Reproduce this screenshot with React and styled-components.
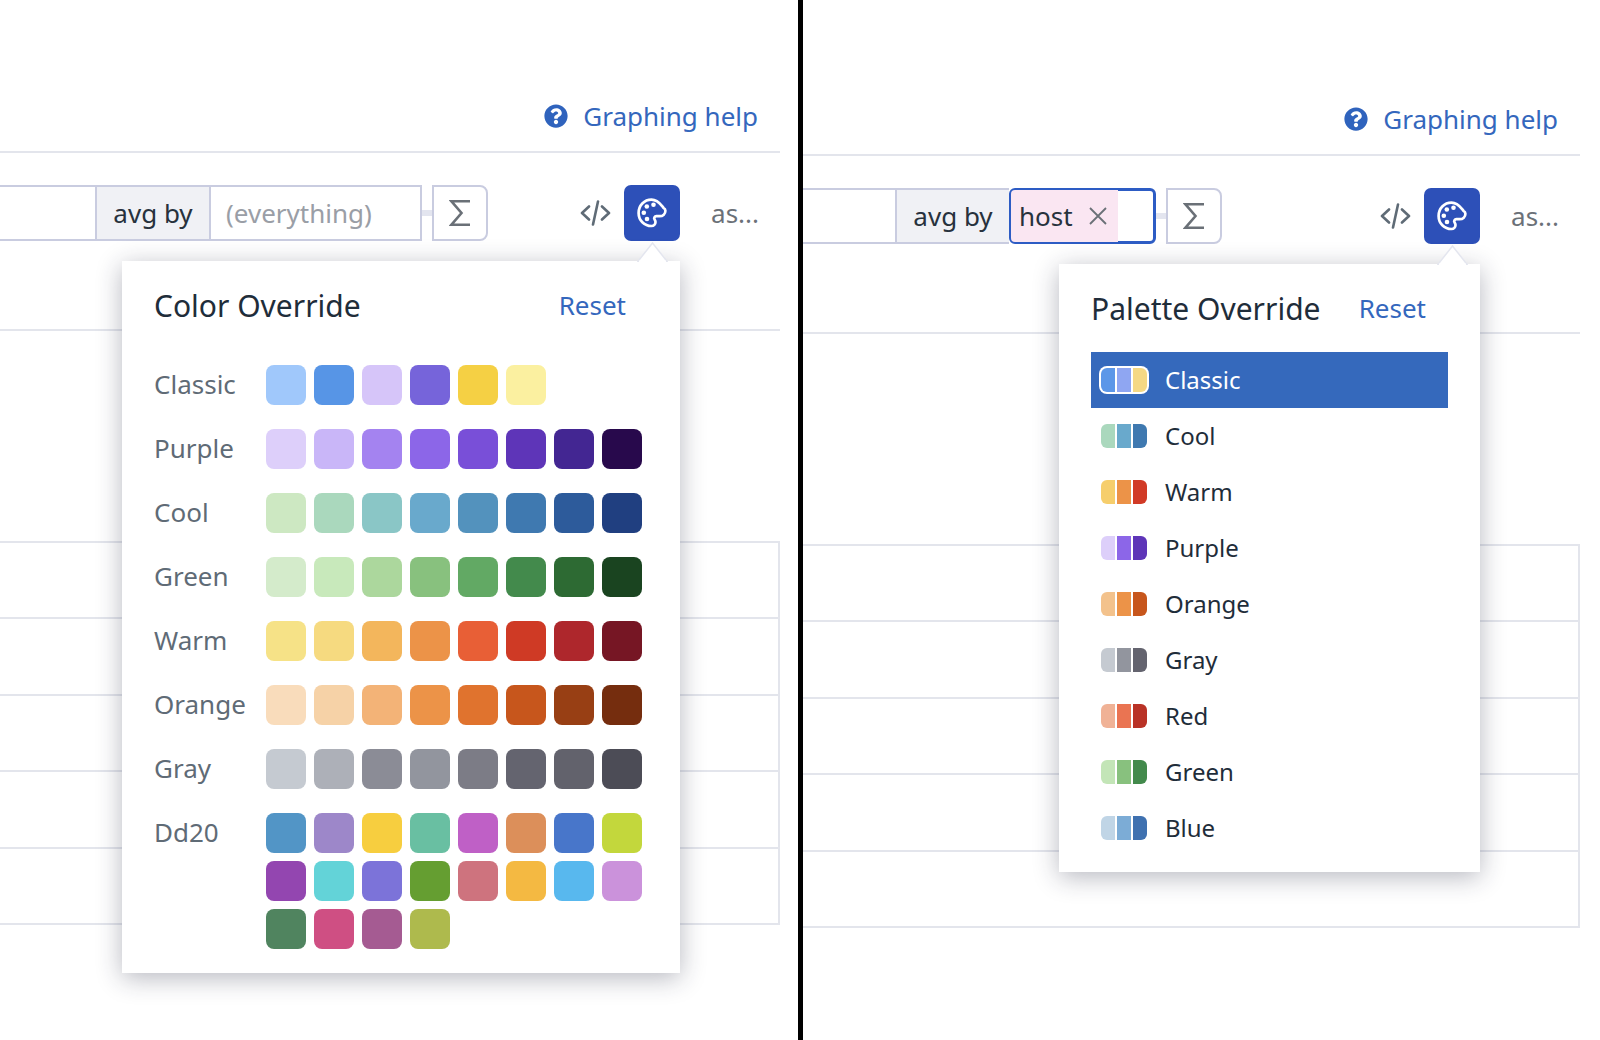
import React from "react";
import styled, { createGlobalStyle } from "styled-components";
import { FaQuestionCircle } from "react-icons/fa";

const Global = createGlobalStyle`
  html, body { margin: 0; padding: 0; background: #fff; }
  body { font-family: "Noto Sans", "Open Sans", sans-serif; color: #1f2d3a; }
  * { box-sizing: border-box; }
`;

const Page = styled.div`
  display: flex;
  width: 1600px;
  height: 1040px;
  overflow: hidden;
  background: #fff;
`;
const Divider = styled.div`
  width: 5px;
  flex: none;
  background: #000;
`;
const Panel = styled.section`
  position: relative;
  flex: none;
  width: ${p => p.$width}px;
  padding-top: ${p => p.$top}px;
  padding-right: ${p => p.$gutter}px;
`;
const HelpRow = styled.div`
  height: 153px;
  padding: 99px 22px 0 0;
  display: flex;
  justify-content: flex-end;
  align-items: flex-start;
  border-bottom: 2px solid #e3e5ec;
`;
const HelpLink = styled.a`
  display: flex;
  align-items: center;
  gap: 15px;
  height: 34px;
  font-size: 26px;
  color: #3467bd;
  & svg { width: 24px; height: 24px; color: #2f63bd; }
`;
const Toolbar = styled.div`
  display: flex;
  align-items: stretch;
  height: 178px;
  padding: 32px 21px 88px 0;
  border-bottom: 2px solid #e3e5ec;
`;
const MetricField = styled.div`
  width: ${p => p.$width}px;
  flex: none;
  border: 2px solid #c9cce0;
  border-left: 0;
  border-right: 0;
`;
const AvgBy = styled.div`
  width: 114px;
  flex: none;
  background: #f0f1f5;
  border: 2px solid #c9cce0;
  border-right: 0;
  display: flex;
  align-items: center;
  justify-content: center;
  font-size: 26px;
  color: #27323d;
  white-space: nowrap;
`;
const GroupField = styled.div`
  width: 213px;
  flex: none;
  border: 2px solid #c9cce0;
  padding-left: 15px;
  display: flex;
  align-items: center;
  font-size: 26px;
  color: #9a9ea6;
  white-space: nowrap;
`;
const FocusField = styled.div`
  width: 147px;
  flex: none;
  border: 3px solid #2d5cc4;
  border-radius: 6px;
  display: flex;
  align-items: stretch;
`;
const Tag = styled.div`
  position: relative;
  margin: -1px 0 -1px -1px;
  width: 107px;
  padding-left: 8px;
  background: #fae6f2;
  display: flex;
  align-items: center;
  gap: 16px;
  font-size: 26px;
  color: #27323d;
  border-radius: 4px 0 0 4px;
`;
const Connector = styled.div`
  width: 10px;
  height: 6px;
  flex: none;
  align-self: center;
  background: #e3e5ef;
`;
const SigmaBox = styled.div`
  width: 56px;
  flex: none;
  border: 2px solid #c9cce0;
  border-radius: 0 8px 8px 0;
  display: flex;
  align-items: center;
  justify-content: center;
  color: #6a7077;
`;
const Spacer = styled.div` flex: 1; `;
const CodeIconWrap = styled.div`
  align-self: center;
  display: flex;
  margin-right: 12px;
  color: #5f6b76;
`;
const PaletteButton = styled.button`
  width: 56px;
  flex: none;
  border: 0;
  padding: 0;
  border-radius: 7px;
  background: #2d50b8;
  color: #fff;
  display: flex;
  align-items: center;
  justify-content: center;
`;
const AsLabel = styled.div`
  margin-left: 31px;
  align-self: center;
  font-size: 26px;
  color: #6b7178;
`;
const Table = styled.div`
  margin-top: 210px;
  border-top: 2px solid #e3e5ec;
  border-right: 2px solid #e3e5ec;
`;
const TableRow = styled.div`
  height: 76.4px;
  border-bottom: 2px solid #e3e5ec;
`;
const Popover = styled.div`
  position: absolute;
  z-index: 3;
  left: ${p => p.$left}px;
  top: ${p => p.$y}px;
  width: ${p => p.$width}px;
  padding: 22px 32px ${p => p.$bottom}px 32px;
  background: #fff;
  box-shadow: 0 5px 24px rgba(30, 35, 60, 0.32);
`;
const Arrow = styled.svg`
  position: absolute;
  right: 12px;
  top: -19px;
  width: 31px;
  height: 20px;
  display: block;
`;
const PopHeader = styled.header`
  height: 44px;
  margin-bottom: ${p => p.$space}px;
  padding-right: 22px;
  display: flex;
  align-items: center;
  justify-content: space-between;
`;
const PopTitle = styled.h3`
  margin: 0;
  font-size: 30px;
  font-weight: 400;
  color: #1f2d3a;
`;
const Reset = styled.a`
  font-size: 26px;
  color: #3467bd;
`;
const ColorRow = styled.div`
  display: flex;
  margin-bottom: ${p => (p.$last ? 0 : 24)}px;
`;
const ColorName = styled.div`
  width: 112px;
  flex: none;
  height: 40px;
  line-height: 38px;
  font-size: 26px;
  color: #5f6b76;
`;
const Swatches = styled.div`
  display: flex;
  flex-wrap: wrap;
  gap: 8px;
  width: 376px;
`;
const Swatch = styled.div`
  width: 40px;
  height: 40px;
  border-radius: 8px;
  background: ${p => p.$color};
`;
const PaletteList = styled.ul`
  list-style: none;
  margin: 0;
  padding: 0;
`;
const PaletteItem = styled.li`
  height: 56px;
  display: flex;
  align-items: center;
  gap: 18px;
  padding-left: 10px;
  font-size: 24px;
  color: ${p => (p.$active ? "#fff" : "#1f2d3a")};
  background: ${p => (p.$active ? "#3569bc" : "transparent")};
`;
const PaletteName = styled.span`
  margin-top: -2px;
`;
const Mini = styled.div`
  display: flex;
  gap: 2px;
  width: 46px;
  height: 24px;
  flex: none;
  border-radius: 6px;
  overflow: hidden;
  background: #fff;
  ${p => p.$active && "box-shadow: 0 0 0 2px #fff;"}
`;
const MiniBar = styled.div`
  flex: 1;
  background: ${p => p.$color};
`;

const colorRows = [
  ["Classic", ["#a0c8fb", "#5795e6", "#d6c5f9", "#7664da", "#f5d044", "#fbf0a0"]],
  ["Purple", ["#ddcffa", "#c9b6f8", "#a483f0", "#8c66e8", "#794fd8", "#5e35b8", "#432692", "#28094c"]],
  ["Cool", ["#cde8c2", "#aad8bd", "#8ac6c6", "#69a9cc", "#5392bd", "#3f79b0", "#2d5b9b", "#203f80"]],
  ["Green", ["#d4ebcb", "#c8e9bb", "#acd79d", "#88c17e", "#62a964", "#438a4c", "#2d6a33", "#1a4420"]],
  ["Warm", ["#f6e287", "#f6da80", "#f3b65c", "#ec9348", "#e85f36", "#cf3a25", "#ae272c", "#761624"]],
  ["Orange", ["#f9dcbb", "#f6d2a7", "#f3b377", "#ec9348", "#e0732e", "#c7561c", "#983f14", "#752d0e"]],
  ["Gray", ["#c5cad1", "#adb0b8", "#8b8c96", "#92959e", "#7c7c86", "#64646f", "#62626c", "#4c4c56"]],
  ["Dd20", ["#5295c6", "#9d87c9", "#f7ce3f", "#69bfa2", "#bf60c6", "#dc8f5a", "#4876ca", "#c3d73c", "#9346b0", "#63d3d8", "#7c73d9", "#659e31", "#ce737e", "#f4b942", "#58b8ee", "#cb92db", "#50845f", "#cf4f83", "#a55b92", "#aeba4d"]],
];

const palettes = [
  ["Classic", ["#5c97e8", "#8fa6f2", "#f5d884"]],
  ["Cool", ["#aad8bd", "#69a9cc", "#3f79b0"]],
  ["Warm", ["#f6ce6c", "#ec9348", "#d13a26"]],
  ["Purple", ["#ddcffa", "#8c66e8", "#5e35b8"]],
  ["Orange", ["#f3c28c", "#ec9348", "#c7561c"]],
  ["Gray", ["#c5cad1", "#92959e", "#64646f"]],
  ["Red", ["#f0b296", "#ea7452", "#b93226"]],
  ["Green", ["#c3e5b7", "#88c17e", "#438a4c"]],
  ["Blue", ["#c0d5e6", "#7cacd6", "#3f71b0"]],
];

const SigmaIcon = () => (
  <svg width="22" height="28" viewBox="0 0 22 28" fill="none" stroke="currentColor" strokeWidth="2.6" strokeLinejoin="miter">
    <path d="M21 2.3H2.5L12.5 14 2.5 25.7H21" />
  </svg>
);
const CodeIcon = () => (
  <svg width="33" height="26" viewBox="0 0 32 26" fill="none" stroke="currentColor" strokeWidth="2.6" strokeLinecap="round" strokeLinejoin="round">
    <path d="M9.5 6.5 2.5 13l7 6.5M22.5 6.5l7 6.5-7 6.5M18.5 1.5 13.5 24.5" />
  </svg>
);
const PaletteIcon = () => (
  <svg width="30" height="30" viewBox="0 0 30 30" fill="none">
    <path
      d="M14.5 1.7C7.2 1.7 1.6 7.5 1.6 15c0 7.3 5.7 13 12.9 13 2.3 0 4-1.7 4-3.9 0-1-.4-1.8-.9-2.6-.5-.7-.6-1.5-.2-2.2.4-.7 1.1-1.1 2-1.1h3.2c3.3 0 5.8-2.3 5.8-5.5 0-1.3-.8-2.2-1.9-2.9C23.7 6.5 20.8 1.7 14.5 1.7Z"
      stroke="#fff"
      strokeWidth="2.7"
      strokeLinejoin="round"
    />
    <circle cx="16.5" cy="6.8" r="2.3" fill="#fff" />
    <circle cx="9.8" cy="8.5" r="2.3" fill="#fff" />
    <circle cx="6.8" cy="14.8" r="2.3" fill="#fff" />
    <circle cx="10" cy="21" r="2.3" fill="#fff" />
  </svg>
);
const CloseIcon = () => (
  <svg width="18" height="18" viewBox="0 0 18 18" fill="none" stroke="#6a7077" strokeWidth="1.8">
    <path d="M1 1l16 16M17 1 1 17" />
  </svg>
);

const PopArrow = () => (
  <Arrow viewBox="0 0 31 20">
    <path d="M0.5 20 15.5 1 30.5 20Z" fill="#fff" stroke="#e4e6ef" strokeWidth="1.5" />
    <rect x="2" y="18.5" width="27" height="1.5" fill="#fff" />
  </Arrow>
);

const Help = () => (
  <HelpRow>
    <HelpLink>
      <FaQuestionCircle />
      Graphing help
    </HelpLink>
  </HelpRow>
);

const RightTools = () => (
  <>
    <Spacer />
    <CodeIconWrap><CodeIcon /></CodeIconWrap>
    <PaletteButton><PaletteIcon /></PaletteButton>
    <AsLabel>as...</AsLabel>
  </>
);

const Rows = () => (
  <Table>
    {[0, 1, 2, 3, 4].map(i => <TableRow key={i} />)}
  </Table>
);

export default function App() {
  return (
    <Page>
      <Global />
      <Panel $width={798} $gutter={18} $top={0}>
        <Help />
        <Toolbar>
          <MetricField $width={95} />
          <AvgBy>avg by</AvgBy>
          <GroupField>(everything)</GroupField>
          <Connector />
          <SigmaBox><SigmaIcon /></SigmaBox>
          <RightTools />
        </Toolbar>
        <Rows />
        <Popover $left={122} $y={261} $width={558} $bottom={24}>
          <PopArrow />
          <PopHeader $space={38}>
            <PopTitle>Color Override</PopTitle>
            <Reset>Reset</Reset>
          </PopHeader>
          {colorRows.map(([name, colors], i) => (
            <ColorRow key={name} $last={i === colorRows.length - 1}>
              <ColorName>{name}</ColorName>
              <Swatches>
                {colors.map((c, j) => <Swatch key={j} $color={c} />)}
              </Swatches>
            </ColorRow>
          ))}
        </Popover>
      </Panel>
      <Divider />
      <Panel $width={797} $gutter={20} $top={3}>
        <Help />
        <Toolbar>
          <MetricField $width={92} />
          <AvgBy>avg by</AvgBy>
          <FocusField>
            <Tag>host <CloseIcon /></Tag>
          </FocusField>
          <Connector />
          <SigmaBox><SigmaIcon /></SigmaBox>
          <RightTools />
        </Toolbar>
        <Rows />
        <Popover $left={256} $y={264} $width={421} $bottom={16}>
          <PopArrow />
          <PopHeader $space={22}>
            <PopTitle>Palette Override</PopTitle>
            <Reset>Reset</Reset>
          </PopHeader>
          <PaletteList>
            {palettes.map(([name, colors], i) => (
              <PaletteItem key={name} $active={i === 0}>
                <Mini $active={i === 0}>
                  {colors.map((c, j) => <MiniBar key={j} $color={c} />)}
                </Mini>
                <PaletteName>{name}</PaletteName>
              </PaletteItem>
            ))}
          </PaletteList>
        </Popover>
      </Panel>
    </Page>
  );
}
